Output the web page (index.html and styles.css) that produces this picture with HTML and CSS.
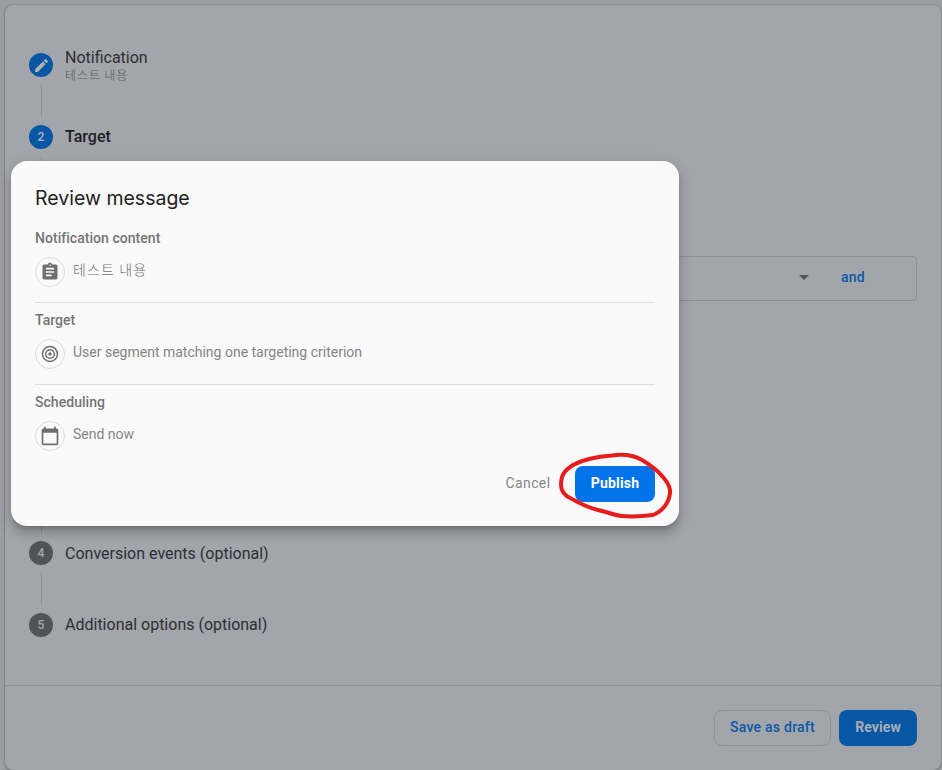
FILE: index.html
```html
<!DOCTYPE html>
<html lang="en">
<head>
<meta charset="utf-8">
<title>Review message</title>
<link rel="stylesheet" href="styles.css">
</head>
<body>
<main class="card">
  <div class="steps">
    <section class="step step-first">
      <div class="rail">
        <span class="badge active"><svg width="17" height="17" viewBox="0 0 24 24"><path fill="currentColor" d="M3 17.25V21h3.75L17.81 9.94l-3.75-3.75L3 17.25zM20.71 7.04a1 1 0 0 0 0-1.41l-2.34-2.34a1 1 0 0 0-1.41 0l-1.83 1.83 3.75 3.75 1.83-1.83z"/></svg></span>
        <i class="line"></i>
      </div>
      <div class="label two-line">Notification<small class="ko-sub">테스트 내용</small></div>
    </section>
    <section class="step step-target">
      <div class="rail"><span class="badge active">2</span><i class="line"></i></div>
      <div class="step-main">
        <div class="label current">Target</div>
        <div class="criteria"><svg class="caret" width="10" height="5" viewBox="0 0 10 5"><path fill="currentColor" d="M0 0h10L5 5z"/></svg><b class="and">and</b></div>
      </div>
    </section>
    <section class="step">
      <div class="rail"><span class="badge">4</span><i class="line"></i></div>
      <div class="label conversion">Conversion events (optional)</div>
    </section>
    <section class="step">
      <div class="rail"><span class="badge">5</span></div>
      <div class="label">Additional options (optional)</div>
    </section>
  </div>
  <footer class="footer">
    <button class="btn draft">Save as draft</button>
    <button class="btn review">Review</button>
  </footer>
</main>

<div class="dialog" role="dialog">
  <h1>Review message</h1>
  <section class="group">
    <h2>Notification content</h2>
    <div class="row">
      <span class="ring"><svg width="20" height="20" viewBox="0 0 24 24"><path fill="currentColor" d="M19 3h-4.18C14.4 1.84 13.3 1 12 1s-2.4.84-2.82 2H5a2 2 0 0 0-2 2v14c0 1.1.9 2 2 2h14a2 2 0 0 0 2-2V5a2 2 0 0 0-2-2zm-7 0a1 1 0 1 1 0 2 1 1 0 0 1 0-2zm2 14H7v-2h7v2zm3-4H7v-2h10v2zm0-4H7V7h10v2z"/></svg></span>
      <span class="ko">테스트 내용</span>
    </div>
  </section>
  <section class="group">
    <h2>Target</h2>
    <div class="row">
      <span class="ring"><svg width="18" height="18" viewBox="0 0 18 18" fill="none" stroke="currentColor" stroke-width="1.5"><circle cx="9" cy="9" r="7.5"/><circle cx="9" cy="9" r="4.3"/><circle cx="9" cy="9" r="1.7" fill="currentColor" stroke="none"/></svg></span>
      <span>User segment matching one targeting criterion</span>
    </div>
  </section>
  <section class="group">
    <h2>Scheduling</h2>
    <div class="row">
      <span class="ring"><svg width="20" height="20" viewBox="0 0 24 24"><path fill="currentColor" d="M20 3h-1V1h-2v2H7V1H5v2H4a2 2 0 0 0-2 2v16c0 1.1.9 2 2 2h16a2 2 0 0 0 2-2V5a2 2 0 0 0-2-2zm0 18H4V8h16v13z"/></svg></span>
      <span>Send now</span>
    </div>
  </section>
  <div class="actions">
    <button class="btn cancel">Cancel</button>
    <button class="btn publish">Publish</button>
  </div>
  <svg class="marker" width="120" height="70" viewBox="555 450 120 70"><path d="M642 460C633 455 622 454 612 455.500C598 456.500 584 459 573 465C564 471 561 475 561 485C561 492 565 496 572 499C580 503 586 507 598 510C608 512 613 515 622 516C633 517 645 516 653 515C661 512 669 504 670 493C671 485 664 477 655 469C650 465 647 463 642 460Z"/></svg>
</div>
</body>
</html>
```
FILE: styles.css
```css
* { box-sizing: border-box; }
body {
  margin: 0;
  height: 770px;
  padding: 5px 1px 0 5px;
  overflow: hidden;
  background: #9b9ea3;
  font: 400 14px/20px Roboto, "Noto Sans CJK KR", sans-serif;
}
.card {
  height: 765px;
  display: flex;
  flex-direction: column;
  border-radius: 8px;
  background: #a2a5aa;
  box-shadow: 0 1px 2px rgba(50, 55, 62, .4), 0 0 2px rgba(50, 55, 62, .45);
}
.steps { height: 680px; padding: 48px 24px 0; }
.step { display: flex; gap: 12px; height: 72px; }
.step-target { height: 416px; }
.rail { width: 24px; display: flex; flex-direction: column; align-items: center; }
.badge {
  width: 24px;
  height: 24px;
  flex: none;
  display: flex;
  align-items: center;
  justify-content: center;
  border-radius: 50%;
  background: #505357;
  color: #a5a8ac;
  font-size: 12px;
  font-weight: 500;
}
.badge.active { background: #0857a5; color: #b0b3b7; }
.line { flex: 1; width: 1px; margin: 8px 0 8px 1px; background: #8c8f93; }
.label { color: #2d3034; font-size: 16px; line-height: 24px; }
.two-line { margin-top: -7px; }
.two-line small { display: block; }
.ko-sub { font: 300 12px/14px "Noto Sans CJK KR", sans-serif; color: #56595d; margin-top: -2px; letter-spacing: .9px; }
.conversion { padding-top: 1px; }
.step-main { flex: 1; }
.current { color: #1c1e22; font-weight: 500; }
.criteria {
  height: 45px;
  margin-top: 107px;
  padding-right: 51px;
  display: flex;
  align-items: center;
  justify-content: flex-end;
  gap: 32px;
  border: 1px solid #8c8f94;
  border-radius: 4px;
}
.caret { color: #505357; margin-top: -2px; }
.and { color: #0b5aa8; font-weight: 500; line-height: 20px; margin-top: -4px; letter-spacing: .25px; }
.footer {
  flex: 1;
  display: flex;
  justify-content: flex-end;
  gap: 8px;
  padding: 24px 24px 0;
  border-top: 1px solid #8d9095;
}
.btn {
  height: 36px;
  padding: 0 0 2px;
  border: 0;
  border-radius: 8px;
  font: 500 14px/20px Roboto, sans-serif;
  letter-spacing: .25px;
}
.draft { width: 117px; border: 1px solid #8f9297; background: transparent; color: #0b59a7; }
.review { width: 78px; background: #0857a5; color: #a9adb2; font-weight: 700; letter-spacing: .1px; }
.dialog {
  position: absolute;
  left: 11px;
  top: 161px;
  width: 668px;
  height: 365px;
  padding: 23px 24px 24px;
  border-radius: 16px;
  background: #fafafa;
  color: #858585;
  box-shadow: 0 8px 10px 1px rgba(0, 0, 0, .12), 0 3px 14px 2px rgba(0, 0, 0, .1), 0 5px 5px -3px rgba(0, 0, 0, .16);
}
h1 { margin: 0 0 16px; color: #212121; font: 400 19.5px/28px Inter, Roboto, sans-serif; }
h2 { margin: 0; font-size: 14px; font-weight: 500; line-height: 20px; color: #757575; letter-spacing: .04px; }
.group { height: 75px; margin-bottom: 7px; border-bottom: 1px solid #dcdcdc; }
.group:nth-of-type(3) { border: 0; height: 67px; }
.row { display: flex; gap: 8px; margin-top: 9px; line-height: 20px; }
.row > span:last-child { margin-top: 3px; }
.row > .ko { font-weight: 300; font-family: "Noto Sans CJK KR", sans-serif; color: #6e6e6e; letter-spacing: 1.15px; }
.row > .ko:last-child { margin-top: 2px; }
.ring {
  width: 30px;
  height: 30px;
  display: flex;
  align-items: center;
  justify-content: center;
  border: 1px solid #dcdcdc;
  border-radius: 50%;
  color: #6e6e6e;
}
.actions { display: flex; justify-content: flex-end; gap: 16px; }
.cancel { width: 62px; background: transparent; color: #858585; font-weight: 400; letter-spacing: .4px; }
.publish { width: 80px; background: #0373e9; color: #fff; font-weight: 700; letter-spacing: .2px; }
.marker { position: absolute; left: 544px; top: 289px; }
.marker path { fill: none; stroke: #e71d1d; stroke-width: 4; stroke-linejoin: round; }
```
